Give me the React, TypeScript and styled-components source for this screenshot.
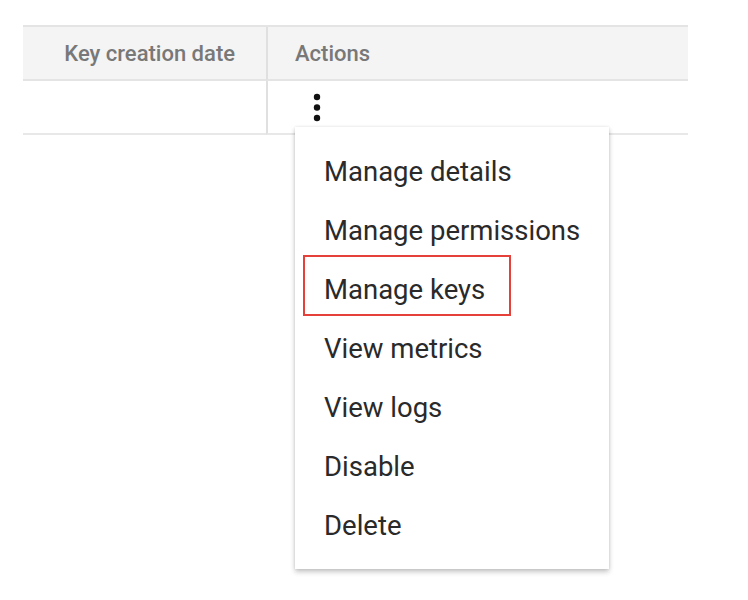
import React from 'react';
import styled, { createGlobalStyle } from 'styled-components';

const GlobalStyle = createGlobalStyle`
  body {
    margin: 0;
    background: #ffffff;
    font-family: Roboto, "Liberation Sans", sans-serif;
  }
`;

const Page = styled.div`
  padding: 25px 0 0 23px;
  min-height: 575px;
`;

const Table = styled.div`
  width: 665px;
  display: grid;
  grid-template-columns: 243px 1fr;
  border-top: 2px solid #e4e4e4;
`;

const HeaderCell = styled.div<{ $align?: 'left' | 'right' }>`
  height: 52px;
  background: #f4f4f4;
  border-bottom: 2px solid #e4e4e4;
  border-left: ${({ $align }) => ($align === 'left' ? '2px solid #e0e0e0' : 'none')};
  display: flex;
  align-items: center;
  justify-content: ${({ $align }) => ($align === 'left' ? 'flex-start' : 'flex-end')};
  padding: ${({ $align }) => ($align === 'left' ? '0 0 0 27px' : '0 31px 0 0')};
  font-size: 22px;
  font-weight: 500;
  color: #787878;
`;

const BodyCell = styled.div<{ $divider?: boolean }>`
  position: relative;
  height: 52px;
  border-bottom: 2px solid #e8e8e8;
  border-left: ${({ $divider }) => ($divider ? '2px solid #e0e0e0' : 'none')};
`;

const KebabButton = styled.button`
  position: absolute;
  left: 43px;
  top: 12px;
  width: 12px;
  height: 30px;
  padding: 0;
  border: none;
  background: none;
  cursor: pointer;
`;

const Menu = styled.ul`
  position: absolute;
  left: 27px;
  top: 46px;
  z-index: 2;
  width: 314px;
  margin: 0;
  padding: 15px 0 14px;
  list-style: none;
  background: #ffffff;
  box-shadow: 0 3px 5px rgba(0, 0, 0, 0.22), 0 0 3px rgba(0, 0, 0, 0.1);
`;

const MenuItem = styled.li<{ $marked?: boolean }>`
  position: relative;
  height: 59px;
  display: flex;
  align-items: center;
  padding-left: 29px;
  font-size: 27.5px;
  color: #2a2a2a;
  cursor: pointer;

  &::after {
    content: '';
    display: ${({ $marked }) => ($marked ? 'block' : 'none')};
    position: absolute;
    left: 8px;
    top: -5px;
    width: 204px;
    height: 57px;
    border: 2px solid #e5403a;
  }
`;

const menuItems = [
  'Manage details',
  'Manage permissions',
  'Manage keys',
  'View metrics',
  'View logs',
  'Disable',
  'Delete',
];

const Kebab = () => (
  <svg width="12" height="30" viewBox="0 0 12 30">
    <circle cx="6" cy="4" r="3.2" fill="#111" />
    <circle cx="6" cy="14.5" r="3.2" fill="#111" />
    <circle cx="6" cy="25" r="3.2" fill="#111" />
  </svg>
);

const App: React.FC = () => {
  return (
    <>
      <GlobalStyle />
      <Page>
        <Table>
          <HeaderCell>Key creation date</HeaderCell>
          <HeaderCell $align="left">Actions</HeaderCell>
          <BodyCell />
          <BodyCell $divider>
            <KebabButton aria-label="Actions">
              <Kebab />
            </KebabButton>
            <Menu>
              {menuItems.map((item) => (
                <MenuItem key={item} $marked={item === 'Manage keys'}>
                  {item}
                </MenuItem>
              ))}
            </Menu>
          </BodyCell>
        </Table>
      </Page>
    </>
  );
};

export default App;
